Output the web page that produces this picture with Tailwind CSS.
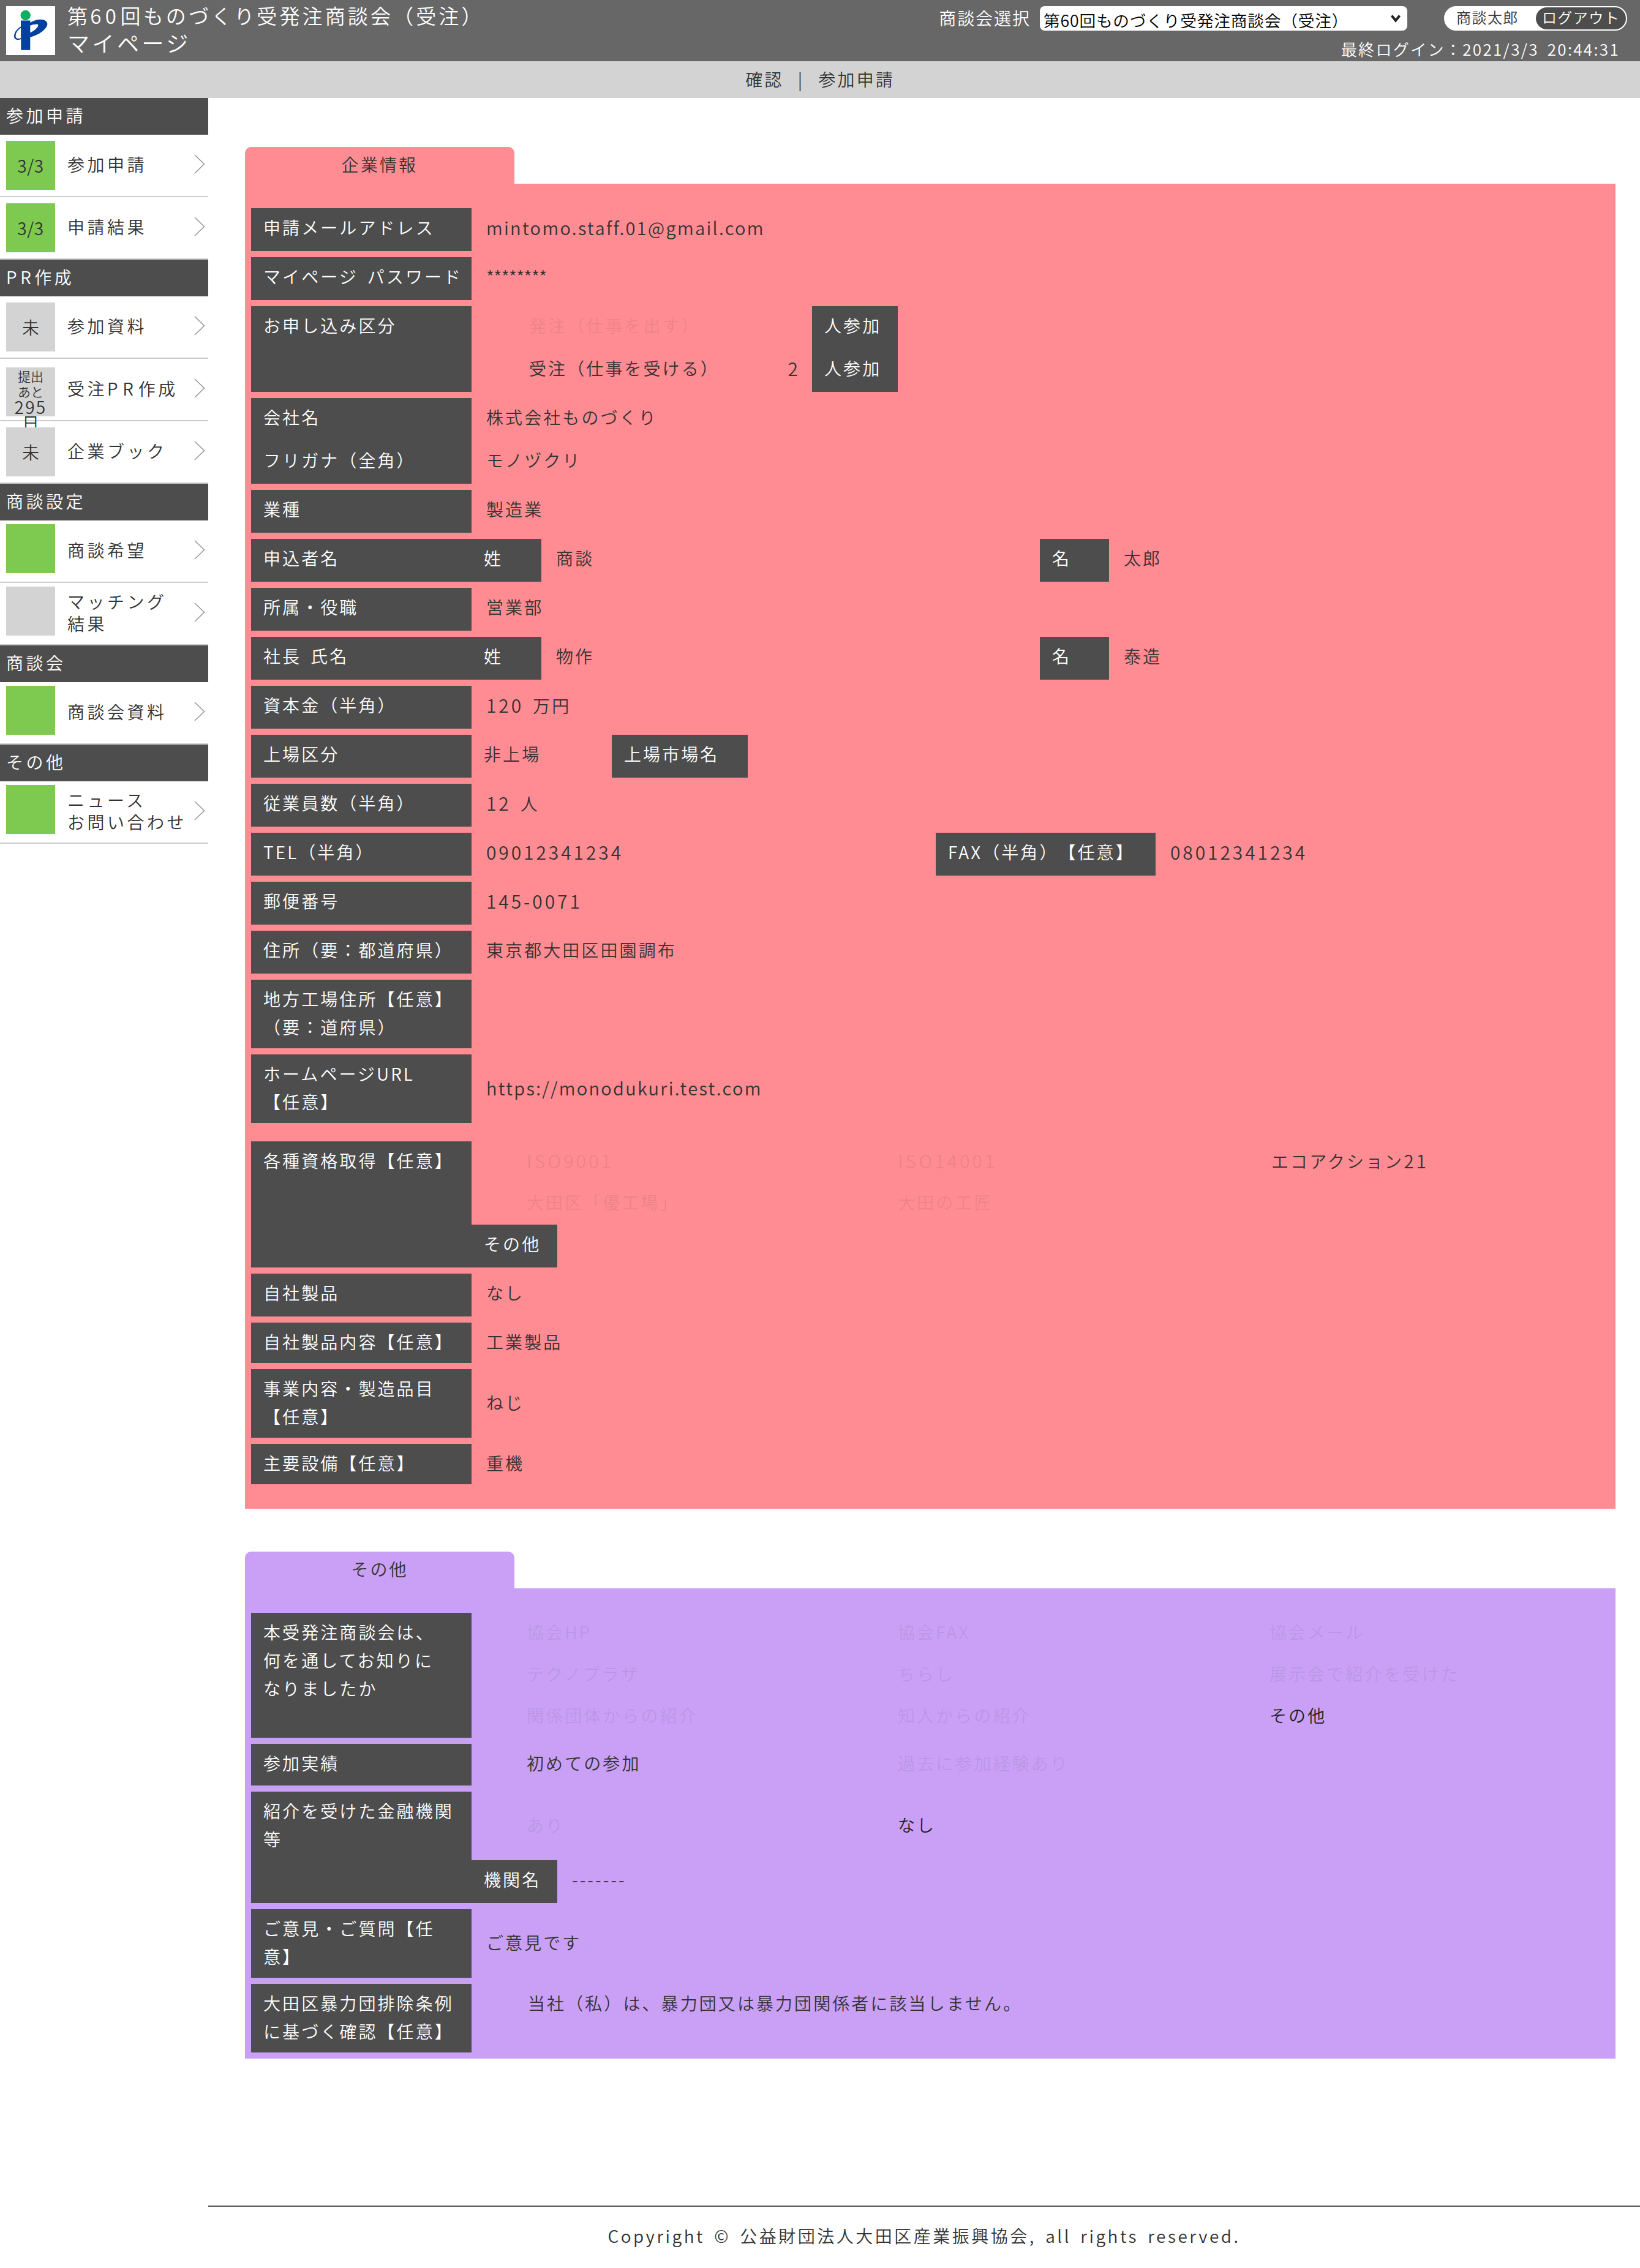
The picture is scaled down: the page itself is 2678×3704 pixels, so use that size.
<!DOCTYPE html>
<html lang="ja">
<head>
<meta charset="utf-8">
<title>マイページ</title>
<script src="https://cdn.jsdelivr.net/npm/@tailwindcss/browser@4"></script>
</head>
<body class="bg-white">
<div class="w-[2678px] h-[3704px] overflow-hidden font-['Noto_Sans_CJK_JP','Noto_Sans',sans-serif] font-[350] text-[28px] leading-[46px] tracking-[0.11em] [word-spacing:0.2em] [text-spacing-trim:space-all] text-[#333]">

<header class="flex justify-between h-[100px] bg-[#676767] text-white">
  <div class="flex">
    <div class="w-[80px] h-[80px] mt-[10px] ml-[10px] bg-white shrink-0">
      <svg viewBox="0 0 80 80" class="w-[80px] h-[80px]">
        <circle cx="31.7" cy="15" r="8.2" fill="#0cb060"/>
        <path d="M24 23.5 L39.3 23.5 L39.3 26.7 C45 24 50 21.7 55 21.7 C63 21.7 68 25 67.3 30 C66 38 54 47 39.3 50.7 L39.3 71.7 L24.3 71.7 Z M39.3 31.7 C44 30 50 29 52 30 C54 33 47 40 39.3 43.3 Z" fill="#03409f" fill-rule="evenodd"/>
        <path d="M24.3 33.3 C16 38 12.5 45 13 50 C13.5 55 19 56 24.3 54 L24.3 52 C20 54 15.5 53 15.5 49 C15.5 44 19 38.5 24.3 35.5 Z" fill="#03409f"/>
      </svg>
    </div>
    <div class="ml-[20px] pt-[3px]">
      <div class="text-[33px] leading-[44px] tracking-[0.125em]">第<span class="tracking-[0.2em]">60</span>回ものづくり受発注商談会（受注）</div>
      <div class="text-[36px] leading-[44px] tracking-[0.125em]">マイページ</div>
    </div>
  </div>
  <div class="flex flex-col items-end pr-[21px] pt-[10px]">
    <div class="flex items-center h-[40px]">
      <span class="tracking-[0.07em] mr-[15px] pb-[3px]">商談会選択</span>
      <div class="relative w-[600px] h-[40px] rounded-[8px] bg-white">
        <select class="block appearance-none w-[600px] h-[36px] bg-transparent text-black pl-[6px] text-[26.7px] tracking-[0.03em] [text-spacing-trim:space-all]">
          <option>第60回ものづくり受発注商談会（受注）</option>
        </select>
        <svg viewBox="0 0 18 14" class="absolute right-[10px] top-[13px] w-[18px] h-[14px] pointer-events-none"><path d="M2.5 2.5 L9 10.5 L15.5 2.5" fill="none" stroke="#222" stroke-width="4"/></svg>
      </div>
      <div class="flex items-center justify-between ml-[60px] w-[299px] h-[40px] rounded-full bg-white border-[2px] border-white text-[#333] text-[24px] tracking-[0.06em]">
        <span class="pl-[18px] pb-[4px]">商談太郎</span>
        <span class="w-[147px] h-[36px] rounded-full bg-[#4d4d4d] text-white text-center leading-[32px]">ログアウト</span>
      </div>
    </div>
    <div class="mt-[7px] mr-[12px] h-[46px] text-[26px] tracking-[0.09em]">最終ログイン：2021/3/3 20:44:31</div>
  </div>
</header>

<nav class="h-[60px] bg-[#d3d3d3] text-center leading-[58px] [word-spacing:0.5em]">確認 | 参加申請</nav>

<div class="flex">
  <aside class="w-[340px] shrink-0 tracking-[0.16em] leading-[36px]">
    <div class="h-[60px] bg-[#4d4d4d] text-white pl-[10px] leading-[57px]">参加申請</div>
    <a class="flex items-center h-[102px] pb-[4px] border-b-2 border-[#ccc]">
      <span class="self-start mt-[10px] ml-[10px] w-[80px] h-[80px] shrink-0 bg-[#7ec94f] flex items-center justify-center text-[28px] tracking-[0.02em]">3/3</span>
      <span class="ml-[20px] flex-1">参加申請</span>
      <svg viewBox="0 0 18 32" class="w-[18px] h-[32px] mr-[5px]"><path d="M1 1 L16.5 16 L1 31" fill="none" stroke="#999" stroke-width="1.6"/></svg>
    </a>
    <a class="flex items-center h-[102px] pb-[4px] border-b-2 border-[#ccc]">
      <span class="self-start mt-[10px] ml-[10px] w-[80px] h-[80px] shrink-0 bg-[#7ec94f] flex items-center justify-center text-[28px] tracking-[0.02em]">3/3</span>
      <span class="ml-[20px] flex-1">申請結果</span>
      <svg viewBox="0 0 18 32" class="w-[18px] h-[32px] mr-[5px]"><path d="M1 1 L16.5 16 L1 31" fill="none" stroke="#999" stroke-width="1.6"/></svg>
    </a>
    <div class="h-[60px] bg-[#4d4d4d] text-white pl-[10px] leading-[57px]"><span class="tracking-[0.2em]">PR</span>作成</div>
    <a class="flex items-center h-[102px] pb-[4px] border-b-2 border-[#ccc]">
      <span class="self-start mt-[10px] ml-[10px] w-[80px] h-[80px] shrink-0 bg-[#d3d3d3] flex items-center justify-center tracking-normal">未</span>
      <span class="ml-[20px] flex-1">参加資料</span>
      <svg viewBox="0 0 18 32" class="w-[18px] h-[32px] mr-[5px]"><path d="M1 1 L16.5 16 L1 31" fill="none" stroke="#999" stroke-width="1.6"/></svg>
    </a>
    <a class="flex items-center h-[102px] pb-[4px] border-b-2 border-[#ccc]">
      <span class="self-start mt-[14px] ml-[10px] w-[80px] h-[80px] shrink-0 bg-[#d3d3d3] text-center tracking-normal">
        <span class="block text-[21px] leading-[25px] pt-[2px]">提出</span>
        <span class="block text-[21px] leading-[25px]">あと</span>
        <span class="block text-[28px] leading-[25px] tracking-[0.08em]">295</span>
        <span class="block text-[28px] leading-[27px]">日</span>
      </span>
      <span class="ml-[20px] flex-1"><span>受注</span><span class="tracking-[0.28em]">PR</span><span>作成</span></span>
      <svg viewBox="0 0 18 32" class="w-[18px] h-[32px] mr-[5px]"><path d="M1 1 L16.5 16 L1 31" fill="none" stroke="#999" stroke-width="1.6"/></svg>
    </a>
    <a class="flex items-center h-[102px] pb-[4px] border-b-2 border-[#ccc]">
      <span class="self-start mt-[10px] ml-[10px] w-[80px] h-[80px] shrink-0 bg-[#d3d3d3] flex items-center justify-center tracking-normal">未</span>
      <span class="ml-[20px] flex-1">企業ブック</span>
      <svg viewBox="0 0 18 32" class="w-[18px] h-[32px] mr-[5px]"><path d="M1 1 L16.5 16 L1 31" fill="none" stroke="#999" stroke-width="1.6"/></svg>
    </a>
    <div class="h-[60px] bg-[#4d4d4d] text-white pl-[10px] leading-[57px]">商談設定</div>
    <a class="flex items-center h-[102px] pb-[4px] border-b-2 border-[#ccc]">
      <span class="self-start mt-[6px] ml-[10px] w-[80px] h-[80px] shrink-0 bg-[#7ec94f]"></span>
      <span class="ml-[20px] flex-1">商談希望</span>
      <svg viewBox="0 0 18 32" class="w-[18px] h-[32px] mr-[5px]"><path d="M1 1 L16.5 16 L1 31" fill="none" stroke="#999" stroke-width="1.6"/></svg>
    </a>
    <a class="flex items-center h-[102px] pb-[4px] border-b-2 border-[#ccc]">
      <span class="self-start mt-[6px] ml-[10px] w-[80px] h-[80px] shrink-0 bg-[#d3d3d3]"></span>
      <span class="ml-[20px] flex-1">マッチング<br>結果</span>
      <svg viewBox="0 0 18 32" class="w-[18px] h-[32px] mr-[5px]"><path d="M1 1 L16.5 16 L1 31" fill="none" stroke="#999" stroke-width="1.6"/></svg>
    </a>
    <div class="h-[60px] bg-[#4d4d4d] text-white pl-[10px] leading-[57px]">商談会</div>
    <a class="flex items-center h-[102px] pb-[4px] border-b-2 border-[#ccc]">
      <span class="self-start mt-[6px] ml-[10px] w-[80px] h-[80px] shrink-0 bg-[#7ec94f]"></span>
      <span class="ml-[20px] flex-1">商談会資料</span>
      <svg viewBox="0 0 18 32" class="w-[18px] h-[32px] mr-[5px]"><path d="M1 1 L16.5 16 L1 31" fill="none" stroke="#999" stroke-width="1.6"/></svg>
    </a>
    <div class="h-[60px] bg-[#4d4d4d] text-white pl-[10px] leading-[57px]">その他</div>
    <a class="flex items-center h-[102px] pb-[4px] border-b-2 border-[#ccc]">
      <span class="self-start mt-[6px] ml-[10px] w-[80px] h-[80px] shrink-0 bg-[#7ec94f]"></span>
      <span class="ml-[20px] flex-1 whitespace-nowrap">ニュース<br>お問い合わせ</span>
      <svg viewBox="0 0 18 32" class="w-[18px] h-[32px] mr-[5px]"><path d="M1 1 L16.5 16 L1 31" fill="none" stroke="#999" stroke-width="1.6"/></svg>
    </a>
  </aside>

  <main class="flex-1 min-w-0 pl-[60px] pr-[40px] pt-[80px]">
    <!-- 企業情報 -->
    <section>
      <div class="w-[440px] h-[60px] rounded-t-[10px] bg-[#ff8c92] text-center leading-[56px]">企業情報</div>
      <div class="h-[2164px] bg-[#ff8c92] pl-[10px] pt-[40px]">
        <div class="flex h-[70px] mb-[10px]"><div class="w-[360px] bg-[#4d4d4d] text-white pl-5 pt-[8px]">申請メールアドレス</div><div class="pl-[24px] pt-[8px] text-[29px] tracking-[0.08em]">mintomo.staff.01@gmail.com</div></div>
        <div class="flex h-[70px] mb-[10px]"><div class="w-[360px] bg-[#4d4d4d] text-white pl-5 pt-[8px]">マイページ パスワード</div><div class="pl-[24px] pt-[8px] tracking-[-0.02em]">********</div></div>
        <div class="flex h-[140px] mb-[10px]">
          <div class="w-[360px] bg-[#4d4d4d] text-white pl-5 pt-[8px]">お申し込み区分</div>
          <div class="w-[556px] pl-[94px]">
            <div class="h-[70px] pt-[8px] text-[#333]/10">発注（仕事を出す）</div>
            <div class="flex justify-between h-[70px] pt-[8px] pr-[20px]"><span>受注（仕事を受ける）</span><span class="text-[30px]">2</span></div>
          </div>
          <div class="w-[140px] bg-[#4d4d4d] text-white pl-[20px]">
            <div class="h-[70px] pt-[8px]">人参加</div>
            <div class="h-[70px] pt-[8px]">人参加</div>
          </div>
        </div>
        <div class="flex h-[140px] mb-[10px]">
          <div class="w-[360px] bg-[#4d4d4d] text-white pl-5">
            <div class="h-[70px] pt-[8px]">会社名</div>
            <div class="h-[70px] pt-[8px]">フリガナ（全角）</div>
          </div>
          <div class="pl-[24px]">
            <div class="h-[70px] pt-[8px]">株式会社ものづくり</div>
            <div class="h-[70px] pt-[8px]">モノヅクリ</div>
          </div>
        </div>
        <div class="flex h-[70px] mb-[10px]"><div class="w-[360px] bg-[#4d4d4d] text-white pl-5 pt-[8px]">業種</div><div class="pl-[24px] pt-[8px]">製造業</div></div>
        <div class="flex h-[70px] mb-[10px]">
          <div class="w-[360px] bg-[#4d4d4d] text-white pl-5 pt-[8px]">申込者名</div>
          <div class="w-[114px] bg-[#4d4d4d] text-white pl-5 pt-[8px]">姓</div>
          <div class="w-[814px] pl-[24px] pt-[8px]">商談</div>
          <div class="w-[113px] bg-[#4d4d4d] text-white pl-5 pt-[8px]">名</div>
          <div class="pl-[24px] pt-[8px]">太郎</div>
        </div>
        <div class="flex h-[70px] mb-[10px]"><div class="w-[360px] bg-[#4d4d4d] text-white pl-5 pt-[8px]">所属・役職</div><div class="pl-[24px] pt-[8px]">営業部</div></div>
        <div class="flex h-[70px] mb-[10px]">
          <div class="w-[360px] bg-[#4d4d4d] text-white pl-5 pt-[8px]">社長 氏名</div>
          <div class="w-[114px] bg-[#4d4d4d] text-white pl-5 pt-[8px]">姓</div>
          <div class="w-[814px] pl-[24px] pt-[8px]">物作</div>
          <div class="w-[113px] bg-[#4d4d4d] text-white pl-5 pt-[8px]">名</div>
          <div class="pl-[24px] pt-[8px]">泰造</div>
        </div>
        <div class="flex h-[70px] mb-[10px]"><div class="w-[360px] bg-[#4d4d4d] text-white pl-5 pt-[8px]">資本金（半角）</div><div class="pl-[24px] pt-[8px]"><span class="text-[30px] tracking-[0.13em]">120</span> 万円</div></div>
        <div class="flex h-[70px] mb-[10px]">
          <div class="w-[360px] bg-[#4d4d4d] text-white pl-5 pt-[8px]">上場区分</div>
          <div class="w-[229px] pl-[20px] pt-[8px]">非上場</div>
          <div class="w-[222px] bg-[#4d4d4d] text-white pl-5 pt-[8px]">上場市場名</div>
        </div>
        <div class="flex h-[70px] mb-[10px]"><div class="w-[360px] bg-[#4d4d4d] text-white pl-5 pt-[8px]">従業員数（半角）</div><div class="pl-[24px] pt-[8px]"><span class="text-[30px] tracking-[0.13em]">12</span> 人</div></div>
        <div class="flex h-[70px] mb-[10px]">
          <div class="w-[360px] bg-[#4d4d4d] text-white pl-5 pt-[8px]">TEL（半角）</div>
          <div class="w-[758px] pl-[24px] pt-[8px] text-[30px] tracking-[0.13em]">09012341234</div>
          <div class="w-[359px] bg-[#4d4d4d] text-white pl-5 pt-[8px]">FAX（半角）【任意】</div>
          <div class="pl-[24px] pt-[8px] text-[30px] tracking-[0.13em]">08012341234</div>
        </div>
        <div class="flex h-[70px] mb-[10px]"><div class="w-[360px] bg-[#4d4d4d] text-white pl-5 pt-[8px]">郵便番号</div><div class="pl-[24px] pt-[8px] text-[30px] tracking-[0.13em]">145-0071</div></div>
        <div class="flex h-[70px] mb-[10px]"><div class="w-[360px] bg-[#4d4d4d] text-white pl-5 pt-[8px]">住所（要：都道府県）</div><div class="pl-[24px] pt-[8px]">東京都大田区田園調布</div></div>
        <div class="flex h-[112px] mb-[10px]"><div class="w-[360px] bg-[#4d4d4d] text-white pl-5 pt-[8px]">地方工場住所【任意】<br>（要：道府県）</div></div>
        <div class="flex h-[112px] mb-[30px]"><div class="w-[360px] bg-[#4d4d4d] text-white pl-5 pt-[8px]">ホームページURL<br>【任意】</div><div class="flex items-center pb-[4px] pl-[24px] text-[29px] tracking-[0.08em]">https://monodukuri.test.com</div></div>
        <div class="flex h-[206px] mb-[10px]">
          <div class="w-[360px] bg-[#4d4d4d] text-white pl-5 pt-[8px]">各種資格取得【任意】</div>
          <div class="flex-1">
            <div class="grid grid-cols-[606px_610px_1fr] h-[68px] pt-[8px] pl-[90px]"><span class="text-[#333]/10 text-[30px] tracking-[0.13em]">ISO9001</span><span class="text-[#333]/10 text-[30px] tracking-[0.13em]">ISO14001</span><span>エコアクション<span class="text-[30px] tracking-[0.13em]">21</span></span></div>
            <div class="grid grid-cols-[606px_610px_1fr] h-[68px] pt-[8px] pl-[90px]"><span class="text-[#333]/10">大田区「優工場」</span><span class="text-[#333]/10">大田の工匠</span></div>
            <div class="w-[140px] h-[70px] bg-[#4d4d4d] text-white pl-5 pt-[8px]">その他</div>
          </div>
        </div>
        <div class="flex h-[70px] mb-[10px]"><div class="w-[360px] bg-[#4d4d4d] text-white pl-5 pt-[8px]">自社製品</div><div class="pl-[24px] pt-[8px]">なし</div></div>
        <div class="flex h-[66px] mb-[10px]"><div class="w-[360px] bg-[#4d4d4d] text-white pl-5 pt-[8px]">自社製品内容【任意】</div><div class="pl-[24px] pt-[8px]">工業製品</div></div>
        <div class="flex h-[112px] mb-[10px]"><div class="w-[360px] bg-[#4d4d4d] text-white pl-5 pt-[8px]">事業内容・製造品目<br>【任意】</div><div class="flex items-center pb-[4px] pl-[24px]">ねじ</div></div>
        <div class="flex h-[66px]"><div class="w-[360px] bg-[#4d4d4d] text-white pl-5 pt-[8px]">主要設備【任意】</div><div class="pl-[24px] pt-[8px]">重機</div></div>
      </div>
    </section>

    <!-- その他 -->
    <section class="mt-[70px]">
      <div class="w-[440px] h-[60px] rounded-t-[10px] bg-[#c9a0f6] text-center leading-[56px]">その他</div>
      <div class="h-[768px] bg-[#c9a0f6] pl-[10px] pt-[40px]">
        <div class="flex h-[204px] mb-[10px]">
          <div class="w-[360px] bg-[#4d4d4d] text-white pl-5 pt-[8px]">本受発注商談会は、<br>何を通してお知りに<br>なりましたか</div>
          <div class="flex-1 pl-[90px]">
            <div class="grid grid-cols-[606px_607px_1fr] h-[68px] pt-[8px] text-[#333]/10"><span>協会HP</span><span>協会FAX</span><span>協会メール</span></div>
            <div class="grid grid-cols-[606px_607px_1fr] h-[68px] pt-[8px] text-[#333]/10"><span>テクノプラザ</span><span>ちらし</span><span>展示会で紹介を受けた</span></div>
            <div class="grid grid-cols-[606px_607px_1fr] h-[68px] pt-[8px] text-[#333]/10"><span>関係団体からの紹介</span><span>知人からの紹介</span><span class="text-[#222]">その他</span></div>
          </div>
        </div>
        <div class="flex h-[68px] mb-[10px]">
          <div class="w-[360px] bg-[#4d4d4d] text-white pl-5 pt-[8px]">参加実績</div>
          <div class="flex-1 pl-[90px] pt-[8px] grid grid-cols-[606px_1fr]"><span>初めての参加</span><span class="text-[#333]/10">過去に参加経験あり</span></div>
        </div>
        <div class="flex h-[182px] mb-[10px]">
          <div class="w-[360px] bg-[#4d4d4d] text-white pl-5 pt-[8px]">紹介を受けた金融機関<br>等</div>
          <div class="flex-1">
            <div class="grid grid-cols-[606px_1fr] items-center h-[112px] pb-[4px] pl-[90px]"><span class="text-[#333]/10">あり</span><span class="text-[#222]">なし</span></div>
            <div class="flex h-[70px]">
              <div class="w-[140px] bg-[#4d4d4d] text-white pl-5 pt-[8px]">機関名</div>
              <div class="pl-[24px] pt-[8px]">-------</div>
            </div>
          </div>
        </div>
        <div class="flex h-[112px] mb-[10px]"><div class="w-[360px] bg-[#4d4d4d] text-white pl-5 pt-[8px]">ご意見・ご質問【任<br>意】</div><div class="flex items-center pb-[4px] pl-[24px]">ご意見です</div></div>
        <div class="flex h-[112px]"><div class="w-[360px] bg-[#4d4d4d] text-white pl-5 pt-[8px]">大田区暴力団排除条例<br>に基づく確認【任意】</div><div class="pl-[92px] pt-[8px]">当社（私）は、暴力団又は暴力団関係者に該当しません。</div></div>
      </div>
    </section>

    <footer class="-ml-[60px] -mr-[40px] mt-[240px] border-t-2 border-[#555] text-center pt-[24px] tracking-[0.125em]">Copyright © 公益財団法人大田区産業振興協会, all rights reserved.</footer>
  </main>
</div>
</div>
</body>
</html>
